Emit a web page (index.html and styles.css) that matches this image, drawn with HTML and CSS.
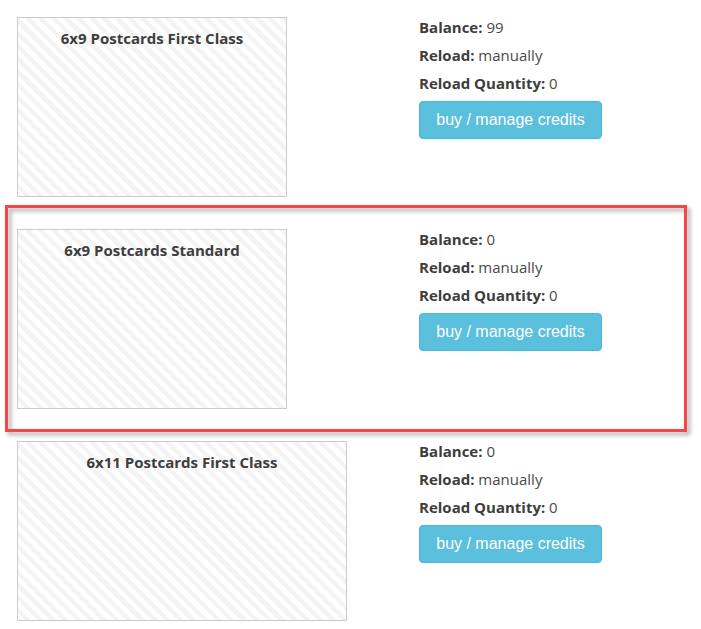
FILE: index.html
```html
<!DOCTYPE html>
<html>
<head>
<meta charset="utf-8">
<link rel="stylesheet" href="styles.css">
</head>
<body>
<div class="list">
  <div class="row">
    <div class="thumb-col">
      <div class="thumb"><span class="thumb-title">6x9 Postcards First Class</span></div>
    </div>
    <div class="info">
      <p class="line"><b>Balance:</b> 99</p>
      <p class="line"><b>Reload:</b> manually</p>
      <p class="line"><b>Reload Quantity:</b> 0</p>
      <button class="btn">buy / manage credits</button>
    </div>
  </div>
  <div class="row highlight">
    <div class="thumb-col">
      <div class="thumb"><span class="thumb-title">6x9 Postcards Standard</span></div>
    </div>
    <div class="info">
      <p class="line"><b>Balance:</b> 0</p>
      <p class="line"><b>Reload:</b> manually</p>
      <p class="line"><b>Reload Quantity:</b> 0</p>
      <button class="btn">buy / manage credits</button>
    </div>
  </div>
  <div class="row">
    <div class="thumb-col">
      <div class="thumb wide"><span class="thumb-title">6x11 Postcards First Class</span></div>
    </div>
    <div class="info">
      <p class="line"><b>Balance:</b> 0</p>
      <p class="line"><b>Reload:</b> manually</p>
      <p class="line"><b>Reload Quantity:</b> 0</p>
      <button class="btn">buy / manage credits</button>
    </div>
  </div>
</div>
</body>
</html>
```
FILE: styles.css
```css
html, body {
  margin: 0;
  padding: 0;
  background: #fff;
}
body {
  font-family: "Open Sans", "Noto Sans", sans-serif;
  font-size: 15px;
  color: #4a4a4a;
}
.list {
  display: flex;
  flex-direction: column;
  gap: 28px;
  padding: 13px 0 0 17px;
}
.row {
  display: flex;
  position: relative;
}
.thumb-col {
  width: 402px;
  flex: none;
  padding-top: 4px;
}
.thumb {
  box-sizing: border-box;
  width: 270px;
  height: 180px;
  border: 1px solid #ccc;
  background: repeating-linear-gradient(45deg, #fff 0, #fff 4.5px, #f4f4f4 4.5px, #f4f4f4 9px);
  text-align: center;
  padding-top: 10px;
}
.thumb.wide {
  width: 330px;
}
.thumb-title {
  font-weight: 700;
  font-size: 15px;
  color: #3d3d3d;
}
.info {
  display: flex;
  flex-direction: column;
  align-items: flex-start;
}
.line {
  margin: 0;
  line-height: 28px;
  white-space: nowrap;
}
.line b {
  color: #3d3d3d;
}
.btn {
  margin-top: 4px;
  height: 38px;
  width: 183px;
  padding: 0;
  background: #5bc0de;
  border: 1px solid #46b8da;
  border-radius: 4px;
  color: #fff;
  font-family: "Liberation Sans", Arial, sans-serif;
  font-size: 16px;
}
.highlight::after {
  content: "";
  position: absolute;
  top: -20px;
  left: -12px;
  right: 14px;
  bottom: -23px;
  border: 3px solid #f44848;
  filter: drop-shadow(3px 3px 2px rgba(0, 0, 0, 0.35));
  pointer-events: none;
}
```
